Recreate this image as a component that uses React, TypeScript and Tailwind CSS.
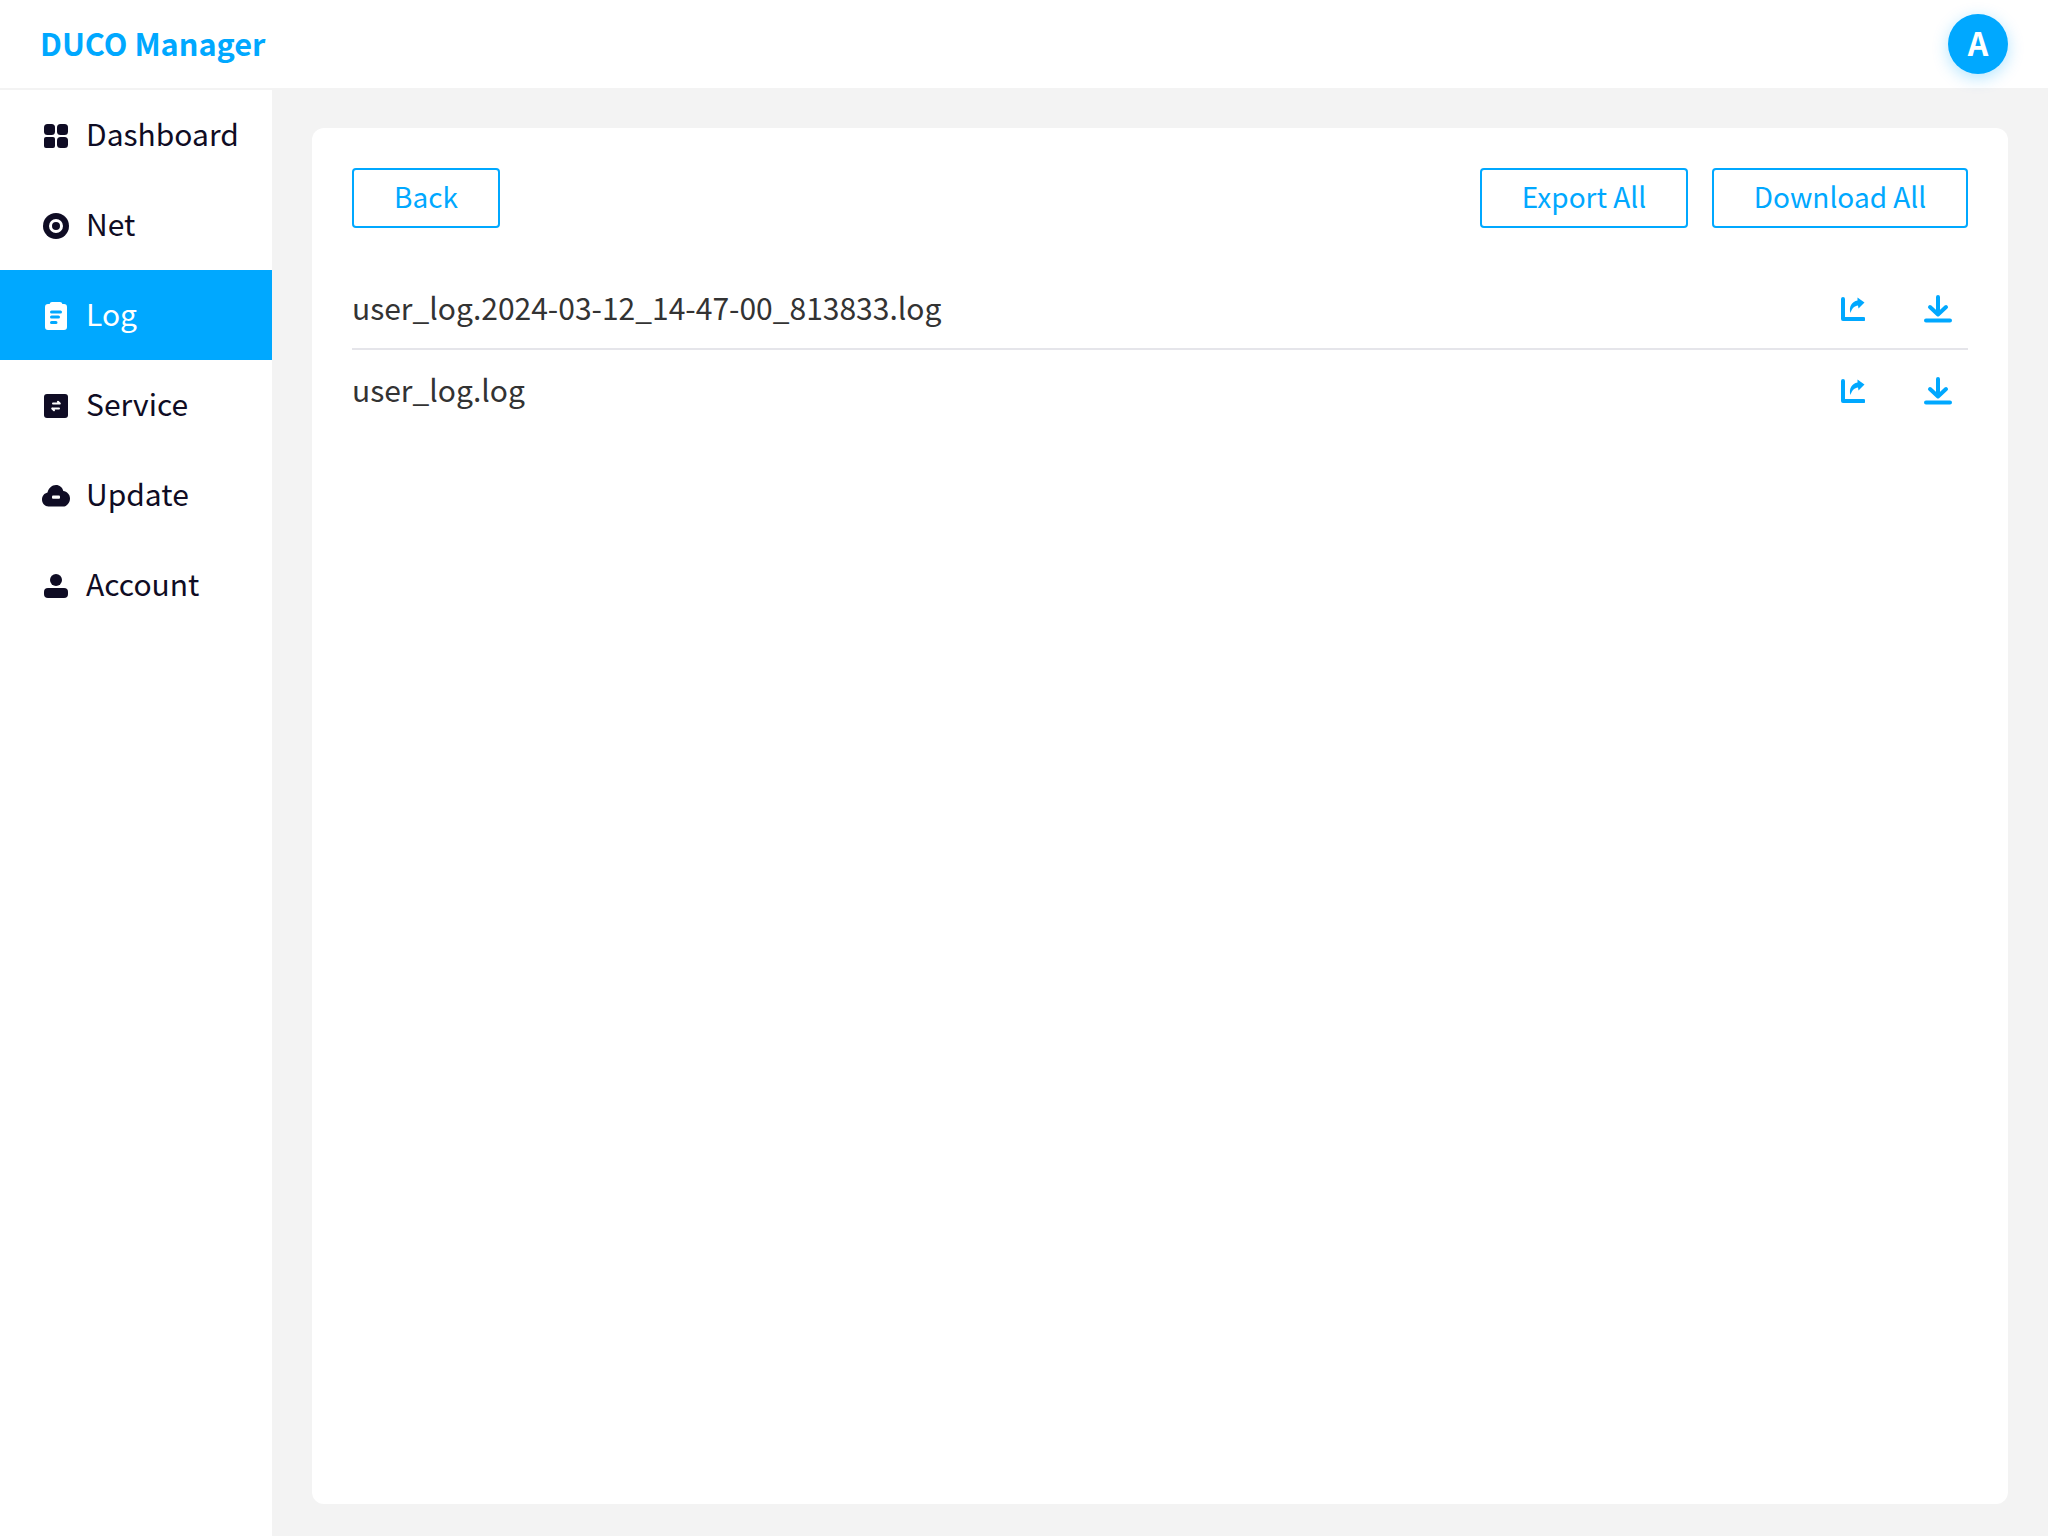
const font = "[font-family:'Noto_Sans_CJK_SC','Noto_Sans',sans-serif]";

function DashboardIcon() {
    return (
        <svg viewBox="0 0 24 24" className="w-6 h-6" fill="currentColor">
            <rect x="0" y="0" width="11" height="11" rx="3.5" />
            <rect x="13" y="0" width="11" height="11" rx="3.5" />
            <rect x="0" y="13" width="11" height="11" rx="2" />
            <rect x="13" y="13" width="11" height="11" rx="3.5" />
        </svg>
    );
}

function NetIcon() {
    return (
        <svg viewBox="0 0 26 26" className="w-[26px] h-[26px]" fill="none">
            <circle cx="13" cy="13" r="13" fill="currentColor" />
            <circle cx="13" cy="13" r="5.500" stroke="#fff" strokeWidth="3" />
        </svg>
    );
}

function LogIcon() {
    return (
        <svg viewBox="0 0 22 28" className="w-[22px] h-[28px]">
            <path fill="currentColor" d="M7 0h8a2.5 2.5 0 0 1 2.4 2H19a3 3 0 0 1 3 3v20a3 3 0 0 1-3 3H3a3 3 0 0 1-3-3V5a3 3 0 0 1 3-3h1.600A2.500 2.500 0 0 1 7 0z" />
            <path stroke="#00a8ff" strokeWidth="3" strokeLinecap="round" d="M6.500 10h9M6.500 15h7M6.500 20.500h4.500" />
        </svg>
    );
}

function ServiceIcon() {
    return (
        <svg viewBox="0 0 24 24" className="w-6 h-6">
            <rect width="24" height="24" rx="3" fill="currentColor" />
            <path stroke="#fff" strokeWidth="2" strokeLinecap="round" fill="none" d="M9 9.500h6.500M14 7.800l1.800 1.700M15 14.500H8.500M10 16.200l-1.800-1.700" />
        </svg>
    );
}

function UpdateIcon() {
    return (
        <svg viewBox="0 0 28 22" className="w-[28px] h-[22px]">
            <path fill="currentColor" d="M14 0c3.600 0 6.500 2.500 7.300 5.900C25 6.500 28 9.300 28 13.200 28 17.700 25 21.500 21 21.500H6.500C3 21.500 0 18.300 0 14.500 0 11 2.300 8.400 5.500 7.600 6.500 3.200 9.800 0 14 0z" />
            <rect x="10" y="10.500" width="8" height="3.200" rx="1" fill="#fff" />
        </svg>
    );
}

function AccountIcon() {
    return (
        <svg viewBox="0 0 24 24" className="w-6 h-6" fill="currentColor">
            <circle cx="12" cy="6" r="6" />
            <rect x="0" y="14" width="24" height="10" rx="4" />
        </svg>
    );
}

function ExportIcon() {
    return (
        <svg viewBox="0 0 24 24" className="w-6 h-6">
            <path d="M2 2v20h20.500" fill="none" stroke="currentColor" strokeWidth="4" strokeLinecap="round" strokeLinejoin="round" />
            <path fill="currentColor" d="M16.500.5l7 5-6 6-.5-3c-3.500.5-6 2.500-7.500 7.500-2-6.500 1.500-11.500 7-12.500z" />
        </svg>
    );
}

function DownloadIcon() {
    return (
        <svg viewBox="0 0 28 28" className="w-7 h-7" fill="none" stroke="currentColor" strokeWidth="4" strokeLinecap="round" strokeLinejoin="round">
            <path d="M14 2v17M6 12l8 7.500 8-7.500M2 25.500h24" />
        </svg>
    );
}

const navItems = [
    { label: "Dashboard", icon: <DashboardIcon /> },
    { label: "Net", icon: <NetIcon /> },
    { label: "Log", icon: <LogIcon />, active: true },
    { label: "Service", icon: <ServiceIcon /> },
    { label: "Update", icon: <UpdateIcon /> },
    { label: "Account", icon: <AccountIcon /> },
];

const files = ["user_log.2024-03-12_14-47-00_813833.log", "user_log.log"];

function OutlineButton({ children, className }: { children: string; className: string }) {
    return (
        <button className={`h-[60px] pb-[4px] border-2 border-[#00a8ff] rounded-[4px] bg-white text-[#00a8ff] text-[28px] ${className}`}>
            {children}
        </button>
    );
}

export default function App() {
    return (
        <div className={`w-[2048px] h-[1536px] flex flex-col bg-[#f3f3f3] overflow-hidden ${font}`}>
            {/* Header */}
            <header className="h-[88px] shrink-0 bg-white flex items-center justify-between pl-[40px] pr-[40px]">
                <div className="text-[30.7px] font-bold text-[#00a8ff] pb-[2px]">DUCO Manager</div>
                <div className="w-[60px] h-[60px] pb-[4px] rounded-full bg-[#00a8ff] text-white text-[32px] font-bold flex items-center justify-center shadow-[0_4px_16px_rgba(0,168,255,0.3)]">
                    A
                </div>
            </header>

            <div className="flex flex-1 min-h-0 pt-[2px]">
                {/* Sidebar */}
                <nav className="w-[272px] shrink-0 bg-white">
                    {navItems.map((item) => (
                        <div
                            key={item.label}
                            className={`h-[90px] flex items-center text-[30px] ${item.active ? "bg-[#00a8ff] text-white" : "text-[#0f0c24]"}`}
                        >
                            <span className="w-[28px] ml-[42px] mr-[16px] pt-[2px] flex items-center justify-center">{item.icon}</span>
                            <span className="pb-[4px]">{item.label}</span>
                        </div>
                    ))}
                </nav>

                {/* Content */}
                <main className="flex-1 pt-[38px] pl-[40px] pr-[40px] pb-[32px]">
                    <div className="h-full bg-white rounded-[12px] p-[40px]">
                        <div className="flex items-center justify-between mb-[40px]">
                            <OutlineButton className="w-[148px]">Back</OutlineButton>
                            <div className="flex gap-[24px]">
                                <OutlineButton className="w-[208px]">Export All</OutlineButton>
                                <OutlineButton className="w-[256px]">Download All</OutlineButton>
                            </div>
                        </div>
                        {files.map((name, i) => (
                            <div
                                key={name}
                                className={`h-[82px] flex items-center justify-between text-[30px] text-[#333333] ${i === 0 ? "pt-[2px] border-b-2 border-[#e5e5ea]" : ""}`}
                            >
                                <span className="pb-[4px]">{name}</span>
                                <div className="flex items-center gap-[59px] pr-[16px] text-[#00a8ff]">
                                    <ExportIcon />
                                    <DownloadIcon />
                                </div>
                            </div>
                        ))}
                    </div>
                </main>
            </div>
        </div>
    );
}
